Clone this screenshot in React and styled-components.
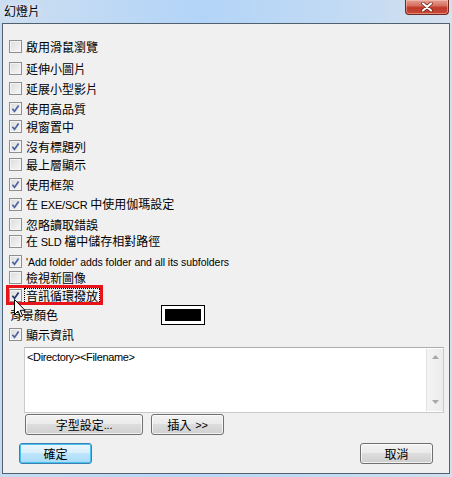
import styled, { createGlobalStyle } from "styled-components";

const GlobalStyle = createGlobalStyle`
  html, body { margin: 0; padding: 0; }
  body {
    width: 452px;
    height: 477px;
    overflow: hidden;
    background: #c3d9ef;
    font-family: "Noto Sans CJK TC", "Liberation Sans", sans-serif;
  }
`;

const options = [
  { label: "啟用滑鼠瀏覽", checked: false, gap: 22 },
  { label: "延伸小圖片", checked: false, gap: 20 },
  { label: "延展小型影片", checked: false, gap: 20 },
  { label: "使用高品質", checked: true, gap: 18 },
  { label: "視窗置中", checked: true, gap: 20 },
  { label: "沒有標題列", checked: true, gap: 18 },
  { label: "最上層顯示", checked: false, gap: 20 },
  { label: "使用框架", checked: true, gap: 20 },
  { label: ["在 ", "EXE/SCR", " 中使用伽瑪設定"], checked: true, gap: 20 },
  { label: "忽略讀取錯誤", checked: false, gap: 17 },
  { label: ["在 ", "SLD", " 檔中儲存相對路徑"], checked: false, gap: 20 },
  { label: "'Add folder' adds folder and all its subfolders", checked: true, gap: 16, latin: true },
  { label: "檢視新圖像", checked: false, gap: 18 },
];

export default function App() {
  return (
    <>
      <GlobalStyle />
      <Window>
        <TitleBar>
          <Title>幻燈片</Title>
          <CloseButton>
            <svg width="14" height="10" viewBox="0 0 14 10">
              <path d="M3 1.5 L11 8.5 M11 1.5 L3 8.5" stroke="#5a1a10" strokeWidth="3.4" strokeLinecap="round" />
              <path d="M3 1.5 L11 8.5 M11 1.5 L3 8.5" stroke="#fff" strokeWidth="2.2" strokeLinecap="round" />
            </svg>
          </CloseButton>
        </TitleBar>
        <Client>
          <OptionList>
            {options.map((o, i) => (
              <Row key={i} $gap={o.gap}>
                <Check checked={o.checked} />
                <Label $latin={o.latin}>
                  {Array.isArray(o.label) ? (
                    <>
                      {o.label[0]}
                      <Latin>{o.label[1]}</Latin>
                      {o.label[2]}
                    </>
                  ) : (
                    o.label
                  )}
                </Label>
              </Row>
            ))}
            <Row $gap={16}>
              <Highlight />
              <Check checked dark />
              <FocusLabel>音訊循環撥放</FocusLabel>
              <Cursor>
                <svg width="12" height="19" viewBox="0 0 12 19">
                  <path
                    d="M0.5 0.5 L0.5 15.5 L4 12 L6.5 17.8 L8.6 16.9 L6.2 11.3 L11 11.3 Z"
                    fill="#fff"
                    stroke="#000"
                    strokeWidth="1"
                    strokeLinejoin="round"
                  />
                </svg>
              </Cursor>
            </Row>
            <ColorRow>
              <ColorLabel>背景顏色</ColorLabel>
              <Swatch>
                <SwatchFill />
              </Swatch>
            </ColorRow>
            <Row $gap={19}>
              <Check checked />
              <Label>顯示資訊</Label>
            </Row>
          </OptionList>

          <InfoBox>
            <InfoText>&lt;Directory&gt;&lt;Filename&gt;</InfoText>
            <ScrollBar>
              <Arrow>
                <svg width="7" height="4" viewBox="0 0 7 4">
                  <path d="M0 4 L3.5 0 L7 4 Z" fill="#a8a8a8" />
                </svg>
              </Arrow>
              <Arrow>
                <svg width="7" height="4" viewBox="0 0 7 4">
                  <path d="M0 0 L3.5 4 L7 0 Z" fill="#a8a8a8" />
                </svg>
              </Arrow>
            </ScrollBar>
          </InfoBox>

          <ToolRow>
            <Button $w={118}>
              字型設定<Latin>...</Latin>
            </Button>
            <Button $w={73}>
              插入<Latin $space>&gt;&gt;</Latin>
            </Button>
          </ToolRow>

          <Footer>
            <Button $w={73} $default>
              確定
            </Button>
            <Button $w={73}>取消</Button>
          </Footer>
        </Client>
      </Window>
    </>
  );
}

function Check({ checked, dark }) {
  return (
    <Box>
      {checked && (
        <svg width="9" height="9" viewBox="0 0 9 9">
          <path
            d="M1.4 4.8 L3.5 7.4 L7.6 1.4"
            fill="none"
            stroke={dark ? "#21356f" : "#4d63a0"}
            strokeWidth="1.7"
          />
        </svg>
      )}
    </Box>
  );
}

const Window = styled.div`
  width: 452px;
  height: 477px;
  display: flex;
  flex-direction: column;
  background: linear-gradient(90deg, #c6dbf0 0%, #b9d7f7 40%, #c2daf2 70%, #d0e0ef 100%);
`;

const TitleBar = styled.div`
  height: 23px;
  display: flex;
  align-items: flex-start;
  justify-content: space-between;
  padding: 0 4px 0 4px;
  background: linear-gradient(90deg, rgba(205, 222, 240, 0.9) 0%, rgba(178, 212, 248, 0.9) 45%, rgba(196, 219, 243, 0.9) 80%, rgba(214, 226, 238, 0.9) 100%);
`;

const Title = styled.div`
  margin-top: 3px;
  font-size: 12px;
  line-height: 16px;
  color: #000;
  text-shadow: 0 0 6px rgba(255, 255, 255, 0.9);
`;

const CloseButton = styled.div`
  width: 44px;
  height: 15px;
  margin-right: -1px;
  box-sizing: border-box;
  border: 1px solid #6e2a22;
  border-top: none;
  border-radius: 0 0 4px 4px;
  background: linear-gradient(180deg, #e4a295 0%, #d66f5f 40%, #c0392a 55%, #c64a35 100%);
  box-shadow: inset 0 0 0 1px rgba(255, 200, 190, 0.5);
  display: flex;
  align-items: center;
  justify-content: center;
`;

const Client = styled.div`
  flex: 1;
  margin: 0 2px 3px 2px;
  border: 1px solid #50606f;
  background: #f0f0f0;
  padding: 16px 5px 0 6px;
  display: flex;
  flex-direction: column;
`;

const OptionList = styled.div`
  display: flex;
  flex-direction: column;
`;

const Row = styled.div`
  position: relative;
  display: flex;
  align-items: center;
  height: 13px;
  margin-bottom: ${(p) => p.$gap - 13}px;
`;

const Box = styled.div`
  width: 13px;
  height: 13px;
  box-sizing: border-box;
  border: 1px solid #8e8f8f;
  background: linear-gradient(135deg, #dcdcdc 0%, #ececec 60%, #f8f8f8 100%);
  box-shadow: inset 0 0 0 1px #f4f4f4;
  display: flex;
  align-items: center;
  justify-content: center;
  flex-shrink: 0;
`;

const Label = styled.span`
  margin-left: 4px;
  font-family: ${(p) =>
    p.$latin
      ? `"Liberation Sans", "Noto Sans CJK TC", sans-serif`
      : `"Noto Sans CJK TC", "Liberation Sans", sans-serif`};
  font-size: ${(p) => (p.$latin ? "10.5px" : "12px")};
  letter-spacing: ${(p) => (p.$latin ? "-0.05px" : "0")};
  line-height: 14px;
  color: #000;
  white-space: nowrap;
`;

const Latin = styled.span`
  font-family: "Liberation Sans", sans-serif;
  font-size: 11px;
  letter-spacing: -0.2px;
  margin-left: ${(p) => (p.$space ? "4px" : "0")};
`;

const FocusLabel = styled(Label)`
  margin-left: 3px;
  padding: 0 1px;
  outline: 1px dotted #000;
  outline-offset: 0;
`;

const Highlight = styled.div`
  position: absolute;
  left: -3px;
  top: -4px;
  width: 97px;
  height: 20px;
  box-sizing: border-box;
  border: 3px solid #e8141a;
`;

const Cursor = styled.div`
  position: absolute;
  left: 5px;
  top: 10px;
  width: 12px;
  height: 19px;
  display: flex;
`;

const ColorRow = styled.div`
  display: flex;
  align-items: center;
  height: 20px;
  margin-bottom: 3px;
`;

const ColorLabel = styled.span`
  width: 151px;
  font-size: 12px;
  line-height: 14px;
  padding-left: 1px;
  color: #000;
`;

const Swatch = styled.div`
  width: 44px;
  height: 20px;
  box-sizing: border-box;
  border: 1px solid #000;
  background: #fff;
  padding: 3px;
  display: flex;
`;

const SwatchFill = styled.div`
  flex: 1;
  background: #000;
`;

const InfoBox = styled.div`
  margin-left: 15px;
  height: 66px;
  box-sizing: border-box;
  border: 1px solid #c7cacf;
  border-top-color: #abadb3;
  background: #fff;
  display: flex;
  justify-content: space-between;
`;

const InfoText = styled.div`
  padding: 3px 0 0 2px;
  font-family: "Liberation Sans", sans-serif;
  font-size: 11px;
  letter-spacing: -0.35px;
  line-height: 13px;
  color: #000;
`;

const ScrollBar = styled.div`
  width: 17px;
  margin: 1px 0;
  box-sizing: border-box;
  border-left: 1px solid #e3e3e3;
  background: linear-gradient(90deg, #f4f4f4, #ececec);
  display: flex;
  flex-direction: column;
  justify-content: space-between;
  padding: 6px 0 7px;
  align-items: center;
`;

const Arrow = styled.div`
  display: flex;
  height: 4px;
`;

const ToolRow = styled.div`
  display: flex;
  gap: 8px;
  margin: 1px 0 0 16px;
`;

const Footer = styled.div`
  display: flex;
  justify-content: space-between;
  margin: 8px 11px 0 10px;
`;

const Button = styled.div`
  width: ${(p) => p.$w}px;
  height: 21px;
  box-sizing: border-box;
  border: 1px solid ${(p) => (p.$default ? "#3c7fb1" : "#707070")};
  border-radius: 3px;
  background: ${(p) =>
    p.$default
      ? "linear-gradient(180deg, #eaf6fd 0%, #d9f0fc 45%, #bee6fd 50%, #a7d9f5 100%)"
      : "linear-gradient(180deg, #f2f2f2 0%, #ebebeb 45%, #dddddd 50%, #cfcfcf 100%)"};
  box-shadow: inset 0 0 0 1px ${(p) => (p.$default ? "#48c0f0" : "rgba(255,255,255,0.7)")};
  display: flex;
  align-items: center;
  justify-content: center;
  font-size: 12px;
  line-height: 14px;
  color: #000;
  white-space: nowrap;
`;
